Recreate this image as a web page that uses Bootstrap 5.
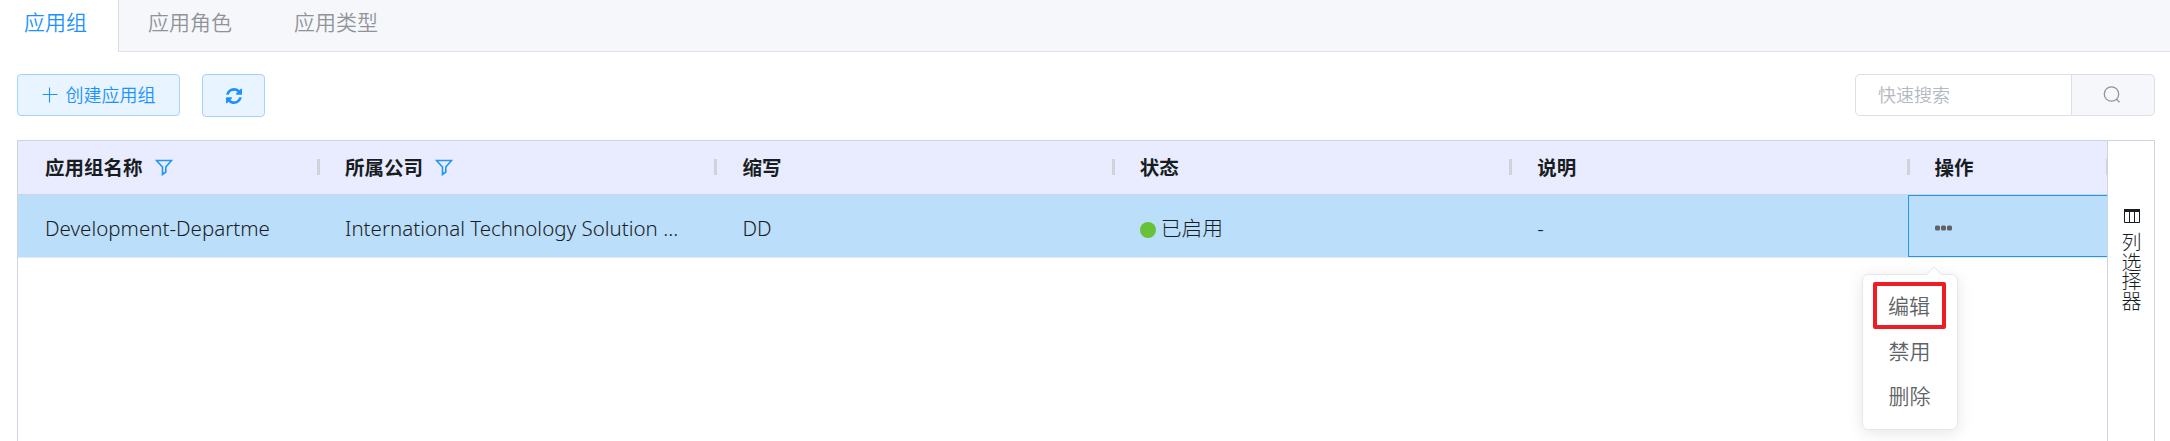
<!DOCTYPE html>
<html lang="zh-CN">
<head>
<meta charset="utf-8">
<title>应用组</title>
<link href="https://cdn.jsdelivr.net/npm/bootstrap@5.3.0/dist/css/bootstrap.min.css" rel="stylesheet">
<style>
html, body { height: 100%; overflow: hidden; }
body { font-family: "Noto Sans", "Noto Sans CJK SC", sans-serif; font-size: 20.5px; font-weight: 300; color: #181d1f; background: #fff; line-height: 1.5; }
.app { height: 441px; }
.tabbar { height: 52px; background: #f5f7fa; border-bottom: 1px solid #dfe3eb; --bs-nav-link-padding-y: 0; flex-wrap: nowrap; font-size: 21px; font-weight: 350; }
.tabbar .nav-link { height: 52px; line-height: 45px; border: 0; border-radius: 0; margin: 0 0 -1px; color: #909399; padding: 0 31px 0 31px; }
.tabbar .nav-link.active { width: 119px; padding: 0 0 0 24px; color: #1c92ff; background: #fff; border-right: 1px solid #dcdfe6; }
.tabbar .first { padding-left: 29px; }
.tools { padding: 22px 15px 0 17px; height: 88px; }
.btn-soft { height: 42px; border: 1px solid #a4d3ff; border-radius: 4px; background: #e8f4ff; color: #1c92ff; font-size: 18px; font-weight: 350; padding: 0; line-height: 1; }
.btn-create { width: 163px; }
.btn-reload { width: 63px; height: 43px; margin-left: 22px; }
.search { width: 300px; height: 42px; }
.search .form-control { height: 42px; border: 1px solid #dcdfe6; border-radius: 5px 0 0 5px; font-size: 18px; font-weight: 350; padding: 0 22px; }
.search .form-control::placeholder { color: #b4b8c1; }
.search .input-group-text { width: 84px; border: 1px solid #dcdfe6; background: #f5f7fa; border-radius: 0 5px 5px 0; padding: 0 14px 0 12px; }
.gridbox { margin: 0 15px 0 17px; border: 1px solid #d0d4e2; border-bottom: 0; }
.cols { display: grid; grid-template-columns: 300px 397.4px 397.4px 397.4px 397.4px 1fr; }
.head { height: 54px; background: #e8ecfe; border-bottom: 1px solid #cfd4df; font-size: 19.5px; font-weight: 700; }
.head > div { padding-left: 27px; padding-top: 12px; line-height: 30px; position: relative; }
.head svg { margin: -4px 0 0 12px; }
.head > div::after { content: ""; position: absolute; right: -2px; top: 18px; width: 3px; height: 16px; background: #d0d4da; }
.head > div:last-child::after { right: 0; width: 1px; }
.line { height: 63px; background: #bbdefb; border-bottom: 1px solid #e4e8f0; }
.line > div { height: 62px; padding-left: 27px; line-height: 67px; white-space: nowrap; }
.line .state { padding-top: 4px; font-size: 20.8px; }
.dot { width: 16px; height: 16px; border-radius: 50%; background: #67c23a; margin-right: 5px; margin-top: 3px; }
.line .focused { position: relative; border: 1px solid #2196f3; border-right: 0; padding-left: 26px; padding-top: 4px; }
.picker { width: 47px; border-left: 1px solid #d0d4e2; padding: 68px 0 0 1px; }
.picker span { font-size: 20px; line-height: 19.5px; width: 20px; margin-top: 10px; }
.pop { position: absolute; left: -47px; top: 78px; width: 96px; height: 156px; border: 1px solid #e4e7ed; border-radius: 6px; background: #fff; box-shadow: 0 3px 16px rgba(0,0,0,.1); padding: 7px 10px; z-index: 5; }
.pop svg { position: absolute; left: 63px; top: -9px; }
.pop a { display: block; height: 45px; line-height: 45px; color: #606266; text-decoration: none; text-align: center; font-size: 21px; font-weight: 350; }
.pop a.hot { width: 73px; height: 47px; line-height: 40px; border: 4px solid #ee1c25; border-radius: 2px; }
</style>
</head>
<body>
<div class="app d-flex flex-column">
  <nav class="nav tabbar flex-shrink-0">
    <a class="nav-link active" href="#">应用组</a>
    <a class="nav-link first" href="#">应用角色</a>
    <a class="nav-link" href="#">应用类型</a>
  </nav>
  <div class="tools d-flex align-items-start flex-shrink-0">
    <button class="btn btn-soft btn-create d-flex align-items-center justify-content-center"><svg class="me-2" width="16" height="16" viewBox="0 0 16 16" stroke="currentColor" fill="none"><path d="M7.500 .5v15M.5 7.500h15" stroke-width="1.1"/></svg>创建应用组</button>
    <button class="btn btn-soft btn-reload d-flex align-items-center justify-content-center" aria-label="刷新"><svg width="16" height="16" viewBox="0 0 1536 1536" fill="currentColor"><path d="M1511 928q0 5-1 7-64 268-268 434.500T764 1536q-146 0-282.500-55T238 1324l-129 129q-19 19-45 19t-45-19-19-45V960q0-26 19-45t45-19h448q26 0 45 19t19 45-19 45l-137 137q71 66 161 102t187 36q134 0 250-65t186-179q11-17 53-117 8-23 30-23h192q13 0 22.500 9.500t9.500 22.500zm25-800v448q0 26-19 45t-45 19h-448q-26 0-45-19t-19-45 19-45l138-138Q969 256 768 256q-134 0-250 65T332 500q-11 17-53 117-8 23-30 23H50q-13 0-22.500-9.500T18 608v-7q65-268 270-434.500T768 0q146 0 284 55.500T1297 212l130-129q19-19 45-19t45 19 19 45z"/></svg></button>
    <div class="input-group search ms-auto flex-nowrap">
      <input class="form-control" placeholder="快速搜索">
      <span class="input-group-text justify-content-center"><svg width="18" height="18" viewBox="0 0 18 18" fill="none" stroke="#909399" stroke-width="1.3"><circle cx="8.500" cy="8" r="7.200"/><path d="M13.500 13.200l3 3"/></svg></span>
    </div>
  </div>
  <div class="gridbox d-flex flex-grow-1">
    <div class="flex-grow-1">
      <div class="cols head">
        <div>应用组名称<svg width="18" height="17" viewBox="0 0 18 17" fill="none" stroke="#2196f3" stroke-width="1.600"><path d="M1.500 1.500h15L10.800 8v5L7.500 15.500V8z"/></svg></div>
        <div>所属公司<svg width="18" height="17" viewBox="0 0 18 17" fill="none" stroke="#2196f3" stroke-width="1.600"><path d="M1.500 1.500h15L10.800 8v5L7.500 15.500V8z"/></svg></div>
        <div>缩写</div><div>状态</div><div>说明</div><div>操作</div>
      </div>
      <div class="cols line">
        <div>Development-Departme</div>
        <div>International Technology Solution ...</div>
        <div>DD</div>
        <div class="state d-flex align-items-center"><i class="dot"></i>已启用</div>
        <div>-</div>
        <div class="focused d-flex align-items-center">
          <svg width="18" height="6" viewBox="0 0 18 6" fill="#606266"><rect x="0" y=".5" width="5" height="5" rx="1.500"/><rect x="6" y=".5" width="5" height="5" rx="1.500"/><rect x="12" y=".5" width="5" height="5" rx="1.500"/></svg>
          <div class="pop">
            <svg width="16" height="9" viewBox="0 0 16 9"><path d="M0 9L8 1l8 8" fill="#fff" stroke="#e4e7ed"/></svg>
            <a class="hot" href="#">编辑</a><a href="#">禁用</a><a href="#">删除</a>
          </div>
        </div>
      </div>
    </div>
    <div class="picker d-flex flex-column align-items-center flex-shrink-0">
      <svg width="16" height="14" viewBox="0 0 16 14" fill="none" stroke="#181d1f"><path d="M0 1.500h16" stroke-width="3"/><path d="M.5 2v11.500h15V2M5.500 3v10M10.500 3v10"/></svg>
      <span>列选择器</span>
    </div>
  </div>
</div>
<script src="https://cdn.jsdelivr.net/npm/bootstrap@5.3.0/dist/js/bootstrap.bundle.min.js"></script>
</body>
</html>
